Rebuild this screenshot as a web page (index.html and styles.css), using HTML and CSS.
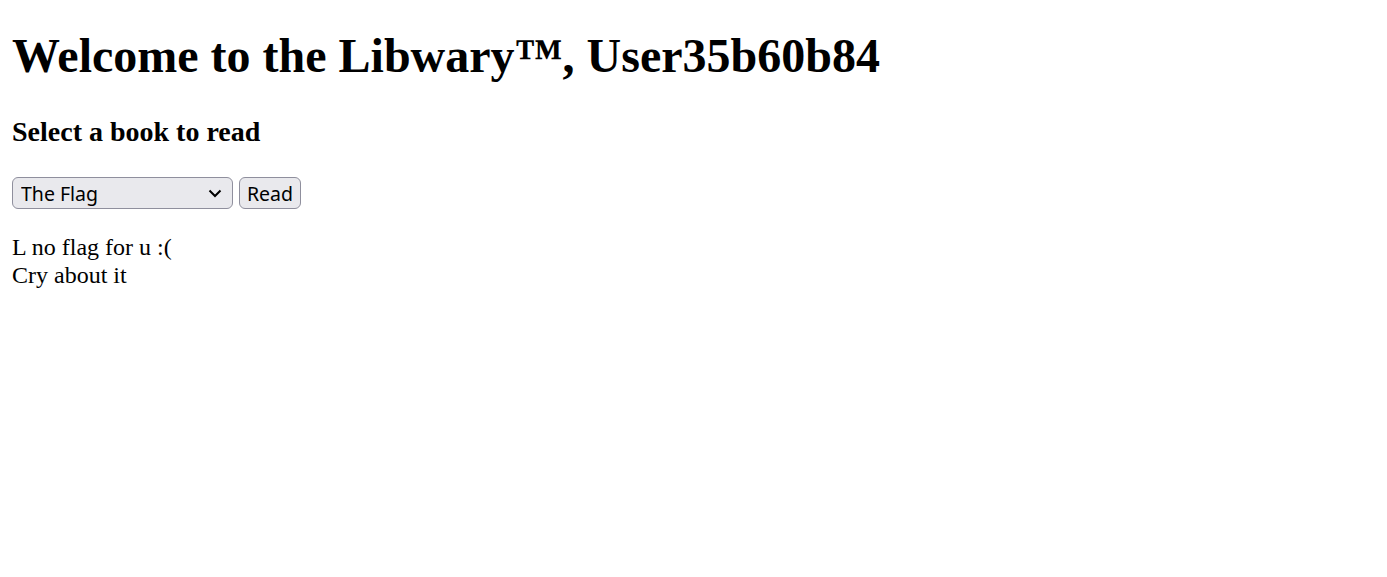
FILE: index.html
```html
<!DOCTYPE html>
<html lang="en">
<head>
<meta charset="utf-8">
<title>Libwary</title>
<link rel="stylesheet" href="styles.css">
</head>
<body>
<h1 class="title">Welcome to the Libwary™, User35b60b84</h1>
<h3 class="subtitle">Select a book to read</h3>
<form class="picker">
  <span class="select-wrap">
    <select class="book-select">
      <option>The Flag</option>
    </select>
    <svg class="chevron" width="14" height="9" viewBox="0 0 14 9" aria-hidden="true"><path d="M1.5 1.5 L7 7 L12.5 1.5" fill="none" stroke="#000" stroke-width="2"/></svg>
  </span>
  <button type="button" class="read-btn">Read</button>
</form>
<div class="book-text">L no flag for u :(<br>Cry about it</div>
</body>
</html>
```
FILE: styles.css
```css
html, body {
  margin: 0;
  padding: 0;
  background: #fff;
}
body {
  padding: 12px;
  font-family: "Liberation Serif", "Times New Roman", serif;
  font-size: 24px;
  color: #000;
}
.title {
  font-size: 48px;
  font-weight: bold;
  margin: 16px 0 33px 0;
  line-height: 55px;
}
.subtitle {
  font-size: 28px;
  font-weight: bold;
  margin: 0 0 28px 0;
  line-height: 32px;
}
.picker {
  display: flex;
  align-items: center;
  gap: 6px;
  margin: 0 0 24px 0;
  padding-top: 1px;
}
.select-wrap {
  position: relative;
  display: inline-block;
  width: 221px;
  height: 32px;
}
.book-select {
  appearance: none;
  -webkit-appearance: none;
  width: 221px;
  height: 32px;
  box-sizing: border-box;
  margin: 0;
  padding: 0 0 0 8px;
  background: #e9e9ed;
  border: 1px solid #8f8f9d;
  border-radius: 6px;
  font-family: "Noto Sans", sans-serif;
  font-size: 19.5px;
  color: #000;
}
.chevron {
  position: absolute;
  left: 196px;
  top: 12px;
  pointer-events: none;
}
.read-btn {
  appearance: none;
  -webkit-appearance: none;
  width: 62px;
  height: 32px;
  box-sizing: border-box;
  margin: 0;
  padding: 0;
  background: #e9e9ed;
  border: 1px solid #8f8f9d;
  border-radius: 6px;
  font-family: "Noto Sans", sans-serif;
  font-size: 19.5px;
  color: #000;
}
.book-text {
  line-height: 28px;
}
```
